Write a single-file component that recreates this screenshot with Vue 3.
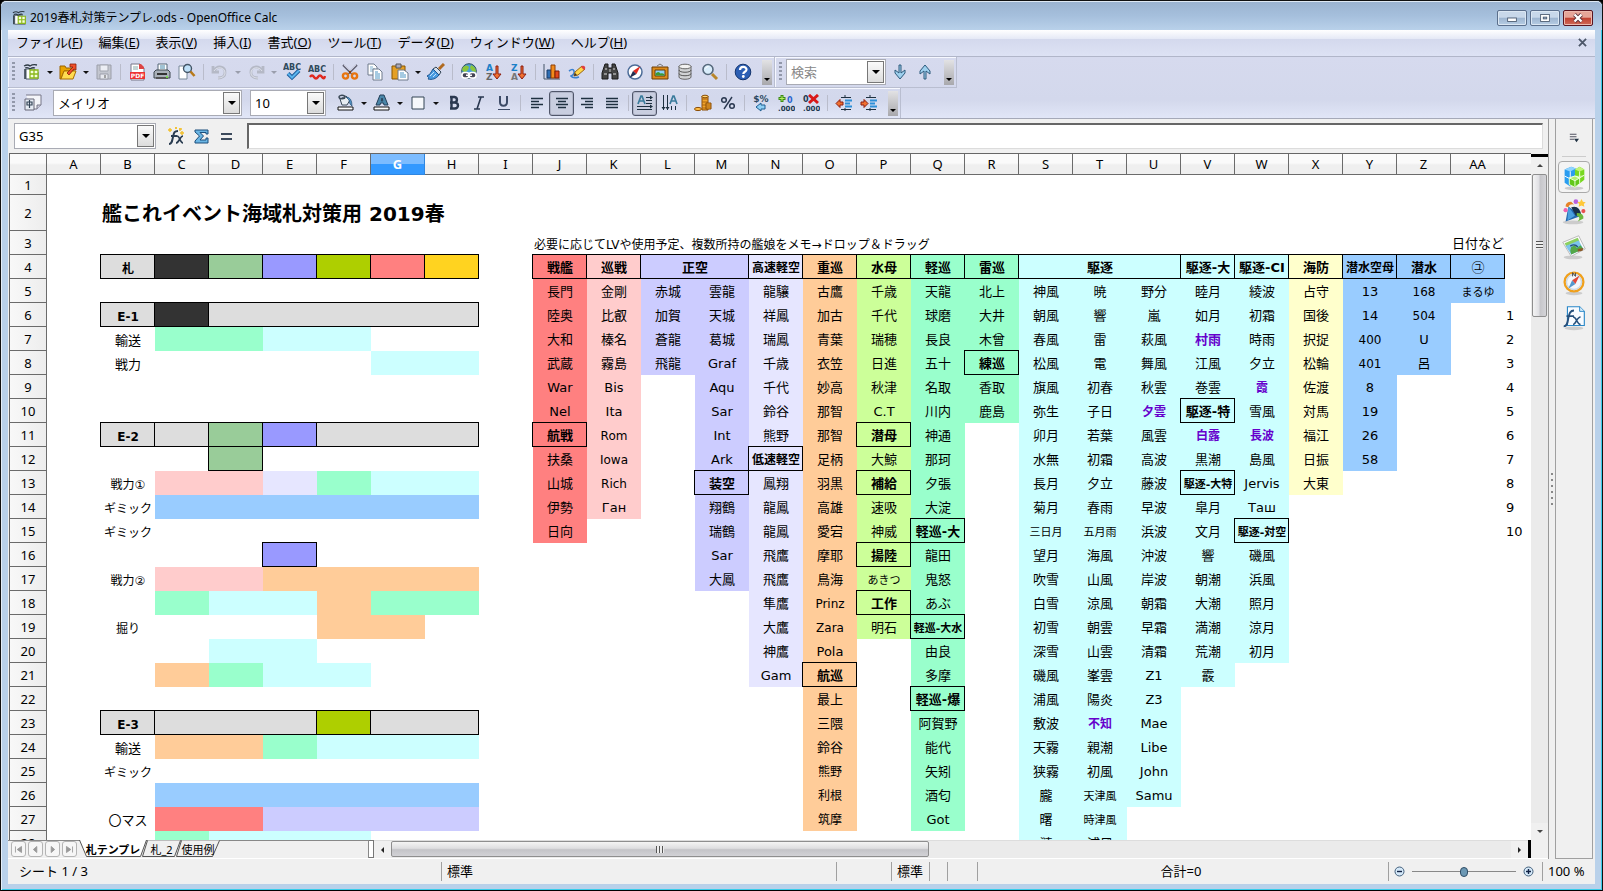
<script setup>
import { ref } from 'vue'

const icons = {
  newdoc: '<path d="M3 6h8l4 3v7H3z" fill="#fff" stroke="#4c5a66"/><path d="M1 3q4-2 6 0q3-2 7-1M2 5q3-1 5 1q3-2 5-1" fill="none" stroke="#2e3a44" stroke-width="1.300"/><path d="M2 6v10" stroke="#2e3a44" stroke-width="1.500"/><path d="M7 7h8v8H7zM7 11h8M11 7v8" fill="#f6ffdc" stroke="#8ab81a" stroke-width="1.300"/>',
  open: '<path d="M1 3h5l1 2h8v3H5L2 16H1z" fill="#e9a400" stroke="#9a6200"/><path d="M2 16l3-8h12l-3 8z" fill="#ffdc50" stroke="#a96f00"/><path d="M8 10l6-6-3 0V1h6v6l-2-1-5 6z" fill="#f0502a" stroke="#8a1e08" stroke-width=".8"/>',
  save: '<path d="M2 2h14v14H2z" fill="#c3c6cf" stroke="#9b9ea9"/><path d="M5 2h8v6H5z" fill="#eceef4" stroke="#a2a5af"/><path d="M5 11h8v5H5z" fill="#e7e9ef" stroke="#9b9ea9"/><path d="M10 12v3" stroke="#888" stroke-width="1.500"/>',
  pdf: '<path d="M3 1h9l4 4v12H3z" fill="#fff" stroke="#778"/><path d="M11 1h2l3 3v2h-5z" fill="#d44"/><path d="M5 4h5M5 6h5" stroke="#8aa" /><path d="M2 9h15v7H2z" fill="#e33"/><text x="9.500" y="15" font-size="6" font-weight="bold" text-anchor="middle" fill="#fff" font-family="DejaVu Sans">PDF</text>',
  print: '<path d="M5 1h9v8H5z" fill="#fff" stroke="#567"/><path d="M7 3h5M7 5h5" stroke="#48a"/><path d="M1 9l2-2h12l2 2v6H1z" fill="#a9b0b8" stroke="#3d464f"/><path d="M4 10h10v2H4z" fill="#333"/><path d="M3 14h12v2H3z" fill="#555"/><path d="M13 14h2" stroke="#7e4" stroke-width="1.500"/>',
  preview: '<path d="M1 3h6l2 2v11H1z" fill="#fff" stroke="#789"/><circle cx="9.500" cy="5.500" r="4" fill="#bfe0f8" stroke="#456" stroke-width="1.400"/><path d="M12.500 8.500l4 4.500" stroke="#b87a1a" stroke-width="2.600"/>',
  undo: '<path d="M2 3v6h6M3 8C6 2 15 3 14 10c0 3-3 5-7 5" fill="none" stroke="#b5b9c6" stroke-width="2.800"/><path d="M3 8C6 3 14 4 14 10c0 3-3 5-7 5" fill="none" stroke="#dfe2ec" stroke-width="1"/>',
  redo: '<path d="M16 3v6h-6M15 8C12 2 3 3 4 10c0 3 3 5 7 5" fill="none" stroke="#b5b9c6" stroke-width="2.800"/><path d="M15 8C12 3 4 4 4 10c0 3 3 5 7 5" fill="none" stroke="#dfe2ec" stroke-width="1"/>',
  spell: '<text x="9" y="7" font-size="8" font-weight="bold" text-anchor="middle" fill="#2f4a5c" font-family="DejaVu Sans">ABC</text><path d="M5 10.500l4 4 7-7" fill="none" stroke="#1c5b9b" stroke-width="4"/><path d="M5 10.500l4 4 7-7" fill="none" stroke="#59b4ee" stroke-width="2"/>',
  autospell: '<text x="9" y="9" font-size="8" font-weight="bold" text-anchor="middle" fill="#2f4a5c" font-family="DejaVu Sans">ABC</text><path d="M2 14q2-3 4 0t4 0t4 0t3-1" fill="none" stroke="#e02a20" stroke-width="2.400"/>',
  cut: '<path d="M2 2l10 10M16 2L6 12" stroke="#667" stroke-width="2"/><path d="M3 2l9 9M15 2l-9 9" stroke="#dde" stroke-width=".8"/><circle cx="4.500" cy="13" r="2.600" fill="none" stroke="#e87510" stroke-width="2.400"/><circle cx="13.500" cy="13" r="2.600" fill="none" stroke="#e87510" stroke-width="2.400"/><circle cx="9" cy="9" r="1.200" fill="#8a3c05"/>',
  copy: '<path d="M2 1h6l3 3v8H2z" fill="#fff" stroke="#6e7b8c"/><path d="M4 4h3M4 6h5M4 8h5" stroke="#7fb0d0"/><path d="M7 6h6l3 3v8H7z" fill="#fff" stroke="#6e7b8c"/><path d="M9 9h3M9 11h5M9 13h5M9 15h5" stroke="#4d96c4"/>',
  paste: '<path d="M1 3h13v13H1z" fill="#e5a025" stroke="#885500"/><path d="M5 1h5v4H5z" fill="#aab" stroke="#555"/><path d="M7 7h6l4 3v7H7z" fill="#fff" stroke="#6e7b8c"/><path d="M9 10h4M9 12h6M9 14h6" stroke="#4d96c4"/>',
  brush: '<path d="M17 1l-5 5" stroke="#b06a20" stroke-width="3"/><path d="M9 4l5 5-2 3-6-6z" fill="#d5e0ee" stroke="#345"/><path d="M6 6l6 6c-3 4-7 5-11 4 1-1 1-2-1-3 3-1 4-4 6-7z" fill="#4a9be0" stroke="#1d5590"/><path d="M3 13l4-4M6 14l3-3" stroke="#bfe2ff"/>',
  link: '<circle cx="9" cy="8" r="7.300" fill="#4a9ed8" stroke="#2c4c58"/><path d="M3 4q4-3 6 0q-1 5-5 5l-2-2zM11 2q5 2 5 7l-4-1-2-3z" fill="#8cc63a"/><rect x="2" y="9.500" width="7" height="5.500" rx="2.500" fill="#445" stroke="#fff" stroke-width="1.500"/><rect x="9" y="9.500" width="7" height="5.500" rx="2.500" fill="#445" stroke="#fff" stroke-width="1.500"/><path d="M6 12.200h6" stroke="#fff" stroke-width="1.500"/>',
  sortaz: '<text x="1" y="8" font-size="9" font-weight="bold" fill="#1c80c8" font-family="DejaVu Sans">A</text><text x="1" y="17" font-size="9" font-weight="bold" fill="#666" font-family="DejaVu Sans">Z</text><path d="M11 3h2v8h3l-4 5-4-5h3z" fill="#f07030" stroke="#8c1d10"/>',
  sortza: '<text x="1" y="8" font-size="9" font-weight="bold" fill="#1c80c8" font-family="DejaVu Sans">Z</text><text x="1" y="17" font-size="9" font-weight="bold" fill="#777" font-family="DejaVu Sans">A</text><path d="M11 3h2v8h3l-4 5-4-5h3z" fill="#f07030" stroke="#8c1d10"/>',
  chart: '<path d="M1 1v15h16" fill="none" stroke="#456"/><path d="M4 7h4v8H4z" fill="#2f6fb5" stroke="#163b68"/><path d="M8 2h4v13H8z" fill="#f28c1c" stroke="#8d3d05"/><path d="M12 8h4v7h-4z" fill="#e3481c" stroke="#7c1c05"/>',
  draw: '<path d="M1 8q4-3 5 0t-3 5q2 3 8 1" fill="none" stroke="#3a80d0" stroke-width="1.600"/><path d="M6 13l1-4 7-6 3 3-7 6z" fill="#ffd84a" stroke="#9a6510"/><path d="M13 4l3 3 1-1c1-2-1-4-3-3z" fill="#e04040"/><path d="M6 13l1-3 2 2z" fill="#333"/>',
  binoc: '<path d="M4 1h3v4h4V1h3l3 9v6h-6v-6H7v6H1v-6z" fill="#444" stroke="#1a1a1a"/><path d="M3 11h3M12 11h3M4 6h2M12 6h2" stroke="#aaa" stroke-width="1.500"/><path d="M8 6h2v3H8z" fill="#888"/>',
  compass: '<circle cx="9" cy="9" r="7" fill="#fff" stroke="#4c6c98" stroke-width="1.500"/><path d="M14.500 3L7 8l3.500 3z" fill="#e02a20"/><path d="M3.500 15L7 8l3.500 3z" fill="#222e50"/>',
  gallery: '<path d="M6 3l3-2 3 2" fill="none" stroke="#777"/><path d="M1 4h16v12H1z" fill="#dc8b1c" stroke="#6b3c05"/><path d="M4 7h10v6H4z" fill="#8cd0f8" stroke="#6b3c05"/><path d="M4.500 12.500v-2q3-3 5 0q2-1 4 1v1z" fill="#3c9a30"/>',
  db: '<path d="M3 3v11c0 3 12 3 12 0V3" fill="#d0d2d4" stroke="#666"/><ellipse cx="9" cy="3.500" rx="6" ry="2.300" fill="#f2f2f2" stroke="#666"/><path d="M3 7c0 3 12 3 12 0M3 10.500c0 3 12 3 12 0" fill="none" stroke="#555"/>',
  zoom: '<circle cx="7" cy="6.500" r="5" fill="#d8ecfa" stroke="#56697c" stroke-width="1.600"/><path d="M11 11l5 5" stroke="#b8862a" stroke-width="3"/><path d="M4.500 5.500q1-2 3-2" stroke="#fff" fill="none"/>',
  help: '<circle cx="9" cy="9" r="7.800" fill="#2c5fb4" stroke="#14356e"/><path d="M6 7c0-4 6.500-4 6.500-.500C12.500 9 9.300 8.500 9.300 11" fill="none" stroke="#fff" stroke-width="2.200"/><circle cx="9.300" cy="13.500" r="1.400" fill="#fff"/>',
  down: '<path d="M8 2h2v8l4-3v3l-5 6-5-6V7l4 3z" fill="#9ed0ee" stroke="#2c5a7c"/>',
  up: '<path d="M8 16h2V8l4 3V8L9 2 4 8v3l4-3z" fill="#9ed0ee" stroke="#2c5a7c"/>',
  styles: '<path d="M2 1h15v10l-4 4H8" fill="#f4f5f9" stroke="#778"/><path d="M17 11h-4v4" fill="#ccd" stroke="#778"/><path d="M1 5h9v11H1z" fill="#e6ecf4" stroke="#667"/><path d="M3 8h5v3H3zM5.500 6v8" fill="none" stroke="#345" stroke-width="1.200"/>',
  fill: '<path d="M1 13h15v3H1z" fill="#fff" stroke="#111"/><path d="M3 5l6-3 4 4-3 5H5z" fill="#e8edf2" stroke="#3c4a58"/><ellipse cx="5" cy="3" rx="3" ry="1.800" fill="none" stroke="#3c4a58" stroke-width="1.400"/><path d="M9 3q6 0 6 9l-2-2-1-4z" fill="#5295c8" stroke="#244c70" stroke-width=".7"/>',
  color: '<path d="M1 13h15v3H1z" fill="#fff" stroke="#111"/><path d="M7 1h4l4 10h-4l-.500-2h-3l-.500 2H3zM8.300 7h1.500L9 4z" fill="#4a86a8" stroke="#243f58"/>',
  border: '<path d="M3 3h12v12H3z" fill="#f6f8fb" stroke="#345"/>',
  bold: '<path d="M5 3h4.500a3 2.800 0 0 1 0 5.500H5M5 8.500h5a3 3 0 0 1 0 6H5M6.500 3v11.500" fill="none" stroke="#2a3850" stroke-width="2.400"/>',
  italic: '<path d="M8 3h6M4 15h6M11 3L7 15" fill="none" stroke="#2a3850" stroke-width="1.600"/>',
  underline: '<path d="M5 2v6c0 5 7 5 7 0V2" fill="none" stroke="#3c4a66" stroke-width="2"/><path d="M3 15.500h12" stroke="#3c4a66"/>',
  left: '<path d="M3 4.500h12M3 7.500h8M3 10.500h12M3 13.500h8" stroke="#1e3040" stroke-width="1.400"/>',
  center: '<path d="M3 4.500h12M5 7.500h8M3 10.500h12M5 13.500h8" stroke="#1e3040" stroke-width="1.400"/>',
  right: '<path d="M3 4.500h12M7 7.500h8M3 10.500h12M7 13.500h8" stroke="#1e3040" stroke-width="1.400"/>',
  justify: '<path d="M3 4.500h12M3 7.500h12M3 10.500h12M3 13.500h12" stroke="#1e3040" stroke-width="1.400"/>',
  ltr: '<path d="M2 10L5 2h1l3 8M3 7h5" fill="none" stroke="#3b7c9c" stroke-width="1.700"/><path d="M10 3.500h6M10 6.500h6M10 9.500h6M1 12.500h15M1 15.500h15" stroke="#1e3040"/><path d="M14 1.500l3 2-3 2zM14 10.500l3 2-3 2z" fill="#1e3040"/>',
  ttb: '<path d="M9 10l3-8h1l3 8M10 7h5" fill="none" stroke="#3b7c9c" stroke-width="1.700"/><path d="M2.500 1v15M6.500 1v15M10.500 12v4M14.500 12v4" stroke="#1e3040"/><path d="M.5 13l2 3 2-3zM4.500 13l2 3 2-3z" fill="#1e3040"/>',
  currency: '<path d="M8 2h6v14H8z" fill="#f2a52c" stroke="#8a4c05"/><path d="M8 5h6M8 8h6M8 11h6M8 14h6" stroke="#a86410"/><ellipse cx="11" cy="2.500" rx="3" ry="1.300" fill="#ffd774" stroke="#8a4c05"/><ellipse cx="4" cy="15" rx="3.500" ry="1.600" fill="#ffbd45" stroke="#8a4c05"/><path d="M12 9h5v6h-5z" fill="#f2a52c" stroke="#8a4c05"/><path d="M12 11h5M12 13h5" stroke="#a86410"/>',
  percent: '<circle cx="5" cy="6" r="2.300" fill="none" stroke="#2a3850" stroke-width="1.500"/><circle cx="13" cy="12" r="2.300" fill="none" stroke="#2a3850" stroke-width="1.500"/><path d="M13 3L5 15" stroke="#2a3850" stroke-width="1.400"/>',
  standard: '<text x="9" y="8" font-size="9" font-weight="bold" text-anchor="middle" fill="#2c4860" font-family="DejaVu Sans">$%</text><path d="M4 13l5-4v2h4v4H9v2z" fill="#8fd0f5" stroke="#1d5d90"/>',
  adddec: '<path d="M5 1v7M1.500 4.500h7" stroke="#3a8a14" stroke-width="3"/><path d="M5 2v5M2.500 4.500h5" stroke="#b4f060"/><text x="10" y="9" font-size="8" font-weight="bold" fill="#2a66d0" font-family="DejaVu Sans">0</text><text x="1" y="17" font-size="7" font-weight="bold" fill="#223850" font-family="DejaVu Sans">.000</text>',
  deldec: '<text x="1" y="8" font-size="8" font-weight="bold" fill="#223850" font-family="DejaVu Sans">0</text><path d="M7 1l9 8M16 1L7 9" stroke="#d81818" stroke-width="3"/><text x="1" y="17" font-size="7" font-weight="bold" fill="#223850" font-family="DejaVu Sans">.000</text>',
  outdent: '<path d="M6 3.500h10M6 15.500h10M10 1v3M10 14v3" stroke="#1e3040"/><path d="M10 6.500h7M10 9.500h5M10 12.500h7" stroke="#2c8fd8" stroke-width="2"/><path d="M1 9.500l4-4v2.500h3v3H5v2.500z" fill="#f07030" stroke="#8c1d10"/>',
  indent: '<path d="M6 3.500h10M6 15.500h10M10 1v3M10 14v3" stroke="#1e3040"/><path d="M10 6.500h7M10 9.500h5M10 12.500h7" stroke="#2c8fd8" stroke-width="2"/><path d="M8 9.500l-4-4v2.500H1v3h3v2.500z" fill="#f07030" stroke="#8c1d10"/>',
  fx: '<path d="M2 17c3 0 3-3 4-7s1-6 5-6M4 9h6" fill="none" stroke="#2a3c50" stroke-width="2"/><path d="M10 9c3 0 3 7 6 7M16 9c-3 0-4 7-7 7" fill="none" stroke="#2a3c50" stroke-width="1.700"/><path d="M3 1v4M1 3h4M15 4v4M13 6h4M9 0v2M8 1h2M13 1v3M12 2h3" stroke="#f2c02c" stroke-width="1.400"/>',
  sum: '<path d="M3 3h13v4h-2V5.500H8L11.500 9 8 13h6v-2h2v5H3v-2l4.500-5L3 5z" fill="#6bb6e4" stroke="#1c4f7c"/>',
  equals: '<path d="M4 7h11M4 12h11" stroke="#3c4a5c" stroke-width="2"/>'
}

const B = (icon, name) => ({ icon, name })
const A = (icon, name, dim) => ({ icon, name, arrow: true, dim })
const S = { sep: true }
const standardBar = [
  A('newdoc', '新規作成'), A('open', '開く'), B('save', '保存'), S,
  B('pdf', 'PDFとして直接エクスポート'), B('print', '印刷'), B('preview', 'プレビュー'), S,
  A('undo', '元に戻す', true), A('redo', 'やり直し', true), B('spell', 'スペルチェック'), B('autospell', '自動スペルチェック'), S,
  B('cut', '切り取り'), B('copy', 'コピー'), A('paste', '貼り付け'), B('brush', '書式のコピー'), S,
  B('link', 'ハイパーリンク'), B('sortaz', '昇順'), B('sortza', '降順'), S,
  B('chart', 'グラフ'), B('draw', '図形描画'), S,
  B('binoc', '検索と置換'), B('compass', 'ナビゲータ'), B('gallery', 'ギャラリー'), B('db', 'データソース'), B('zoom', 'ズーム'), S,
  B('help', 'ヘルプ')
]
const formatBar = [
  A('fill', '背景色'), A('color', 'フォントの色'), A('border', '枠線'), B('bold', '太字'), B('italic', '斜体'), B('underline', '下線'), S,
  B('left', '左揃え'), { ...B('center', '中央揃え'), on: true }, B('right', '右揃え'), B('justify', '両端揃え'), S,
  { ...B('ltr', '横書き'), on: true }, B('ttb', '縦書き'), S,
  B('currency', '通貨'), B('percent', 'パーセント'), S,
  B('standard', '標準'), B('adddec', '小数点以下の桁数を増やす'), B('deldec', '小数点以下の桁数を減らす'), S,
  B('outdent', 'インデント減'), B('indent', 'インデント増')
]

const menus = [
  ['ファイル', 'F'], ['編集', 'E'], ['表示', 'V'], ['挿入', 'I'], ['書式', 'O'],
  ['ツール', 'T'], ['データ', 'D'], ['ウィンドウ', 'W'], ['ヘルプ', 'H']
]

const cellRef = ref('G35')
const formula = ref('')
const query = ref('')
const zoom = ref(50)

const letters = [...'ABCDEFGHIJKLMNOPQRSTUVWXYZ', 'AA', 'AB']
const col = (l) => letters.indexOf(l)
const grid = {}
const put = (l, r, cell) => { grid[r + ':' + col(l)] = cell }

/* Ship lists, from row 5 down. Prefixes: * boxed heading, ! purple, ~ 12px, - 11px */
const ships = {
  J: ['red', '長門 陸奥 大和 武蔵 War Nel *航戦 扶桑 山城 伊勢 日向'],
  K: ['pink', '金剛 比叡 榛名 霧島 Bis Ita ~Rom ~Iowa ~Rich Ган'],
  L: ['violet', '赤城 加賀 蒼龍 飛龍'],
  M: ['violet', '雲龍 天城 葛城 Graf Aqu Sar Int Ark *装空 翔鶴 瑞鶴 Sar 大鳳'],
  N: ['pale', '龍驤 祥鳳 瑞鳳 千歳 千代 鈴谷 熊野 *~低速軽空 鳳翔 龍鳳 龍鳳 飛鷹 飛鷹 隼鷹 大鷹 神鷹 Gam'],
  O: ['orange', '古鷹 加古 青葉 衣笠 妙高 那智 那智 足柄 羽黒 高雄 愛宕 摩耶 鳥海 ~Prinz ~Zara Pola *航巡 最上 三隈 鈴谷 ~熊野 ~利根 ~筑摩'],
  P: ['lime', '千歳 千代 瑞穂 日進 秋津 C.T *潜母 大鯨 *補給 速吸 神威 *揚陸 -あきつ *工作 明石'],
  Q: ['mint', '天龍 球磨 長良 五十 名取 川内 神通 那珂 夕張 大淀 *軽巡-大 龍田 鬼怒 あぶ *-軽巡-大水 由良 多摩 *軽巡-爆 阿賀野 能代 矢矧 酒匂 Got'],
  R: ['mint', '北上 大井 木曾 *練巡 香取 鹿島'],
  S: ['cyan', '神風 朝風 春風 松風 旗風 弥生 卯月 水無 長月 菊月 -三日月 望月 吹雪 白雪 初雪 深雪 磯風 浦風 敷波 天霧 狭霧 朧 曙 漣'],
  T: ['cyan', '暁 響 雷 電 初春 子日 若葉 初霜 夕立 春雨 -五月雨 海風 山風 涼風 朝雲 山雲 峯雲 陽炎 !~不知 親潮 初風 -天津風 -時津風 浦風'],
  U: ['cyan', '野分 嵐 萩風 舞風 秋雲 !~夕雲 風雲 高波 藤波 早波 浜波 沖波 岸波 朝霜 早霜 清霜 Z1 Z3 Mae Libe John Samu'],
  V: ['cyan', '睦月 如月 !村雨 江風 巻雲 *駆逐-特 !~白露 黒潮 *-駆逐-大特 皐月 文月 響 朝潮 大潮 満潮 荒潮 霰'],
  W: ['cyan', '綾波 初霜 時雨 夕立 !~霞 雪風 !~長波 島風 Jervis Таш *-駆逐-対空 磯風 浜風 照月 涼月 初月'],
  X: ['cream', '占守 国後 択捉 松輪 佐渡 対馬 福江 日振 大東'],
  Y: ['sky', '13 14 ~400 ~401 8 19 26 58'],
  Z: ['sky', '~168 ~504 U 呂'],
  AA: ['sky', '-まるゆ']
}
for (const [l, [bg, list]] of Object.entries(ships)) {
  list.split(' ').forEach((raw, i) => {
    const cls = [bg]
    let text = raw
    if (text[0] === '*') { cls.push('box', 'b'); text = text.slice(1) }
    if (text[0] === '!') { cls.push('purple', 'b'); text = text.slice(1) }
    if (text[0] === '~') { cls.push('s12'); text = text.slice(1) }
    if (text[0] === '-') { cls.push('s11'); text = text.slice(1) }
    put(l, i + 5, { text, cls })
  })
}
const heads = [
  ['J', '戦艦', 'red'], ['K', '巡戦', 'pink'], ['L', '正空', 'violet', 2], ['N', '高速軽空', 'pale s12'],
  ['O', '重巡', 'orange'], ['P', '水母', 'lime'], ['Q', '軽巡', 'mint'], ['R', '雷巡', 'mint'],
  ['S', '駆逐', 'cyan', 3], ['V', '駆逐-大', 'cyan'], ['W', '駆逐-CI', 'cyan'], ['X', '海防', 'cream'],
  ['Y', '潜水空母', 'sky s12'], ['Z', '潜水', 'sky'], ['AA', '㋴', 'sky']
]
for (const [l, text, bg, span] of heads) put(l, 4, { text, span, cls: [bg, 'box', l === 'AA' ? '' : 'b'] })
for (let n = 1; n <= 10; n++) put('AB', n + 5, { text: String(n), cls: ['start'] })

put('B', 2, { text: '艦これイベント海域札対策用 2019春', cls: ['title'] })
put('J', 3, { text: '必要に応じてLVや使用予定、複数所持の艦娘をメモ→ドロップ＆ドラッグ', cls: ['start', 's12', 'low'] })
put('AA', 3, { text: '日付など', cls: ['end'] })

const labels = { 4: '札', 6: 'E-1', 7: '輸送', 8: '戦力', 11: 'E-2', 13: '~戦力①', 14: '~ギミック', 15: '~ギミック', 17: '~戦力②', 19: '~掘り', 23: 'E-3', 24: '輸送', 25: '~ギミック', 27: '〇マス' }
for (const [r, raw] of Object.entries(labels)) {
  const head = ['4', '6', '11', '23'].includes(r)
  const small = raw[0] === '~' || head
  put('B', r, { text: raw.replace('~', ''), cls: [head ? 'gray box b' : '', small ? 's12' : '', 'low'] })
}
/* Map bands: row, column, span, colour */
const bands = [
  [4, 'C', 1, 'black box'], [4, 'D', 1, 'green box'], [4, 'E', 1, 'indigo box'], [4, 'F', 1, 'olive box'], [4, 'G', 1, 'red box'], [4, 'H', 1, 'gold box'],
  [6, 'C', 1, 'black box'], [6, 'D', 5, 'gray box'],
  [7, 'C', 2, 'mint'], [7, 'E', 2, 'cyan'], [8, 'G', 2, 'cyan'],
  [11, 'C', 1, 'gray box'], [11, 'D', 1, 'green box'], [11, 'E', 1, 'indigo box'], [11, 'F', 3, 'gray box'], [12, 'D', 1, 'green box'],
  [13, 'C', 2, 'pink'], [13, 'E', 1, 'pale'], [13, 'F', 1, 'mint'], [13, 'G', 2, 'cyan'], [14, 'C', 6, 'sky'],
  [16, 'E', 1, 'indigo box'], [17, 'C', 2, 'pink'], [17, 'E', 4, 'orange'],
  [18, 'C', 1, 'mint'], [18, 'D', 2, 'cyan'], [18, 'F', 1, 'orange'], [18, 'G', 2, 'mint'], [19, 'F', 2, 'orange'],
  [20, 'D', 2, 'cyan'], [21, 'C', 1, 'orange'], [21, 'D', 1, 'mint'], [21, 'E', 2, 'cyan'],
  [23, 'C', 3, 'gray box'], [23, 'F', 1, 'olive box'], [23, 'G', 2, 'gray box'],
  [24, 'C', 2, 'orange'], [24, 'E', 1, 'mint'], [24, 'F', 3, 'cyan'],
  [26, 'C', 6, 'sky'], [27, 'C', 2, 'red'], [27, 'E', 4, 'violet'], [28, 'C', 1, 'mint'], [28, 'D', 3, 'cyan']
]
for (const [r, l, span, cls] of bands) put(l, r, { text: '', span, cls: [cls] })

const rows = []
for (let r = 1; r <= 28; r++) {
  const cells = []
  for (let c = 0; c < letters.length;) {
    const cell = grid[r + ':' + c] || { text: '', cls: [] }
    cells.push(cell)
    c += cell.span || 1
  }
  rows.push({ r, cells })
}

const navs = [
  ['最初のシート', 'M4 4v7M11 4v7L6 7.500z'], ['前のシート', 'M9 4v7L5 7.500z'],
  ['次のシート', 'M6 4v7l4-3.500z'], ['最後のシート', 'M4 4v7l5-3.500zM11 4v7']
]
const tabs = [
  { name: '札テンプレ', w: 68, shape: '0.5,0 7.500,16.500 61.500,16.500 67.500,0' },
  { name: '札_2', w: 39, shape: '5.500,0.500 0.500,16.500 32.500,16.500 38.500,0.500' },
  { name: '使用例', w: 44, shape: '5.500,0.500 0.500,16.500 36.500,16.500 43.500,0.500' }
]

const deck = [
  ['プロパティ', '<ellipse cx="16" cy="28" rx="10" ry="2" fill="#ccc"/><path d="M6 8l7-3 5 2v15l-6 4-6-4z" fill="#2a9df0"/><path d="M6 8l7-3 5 2-6 3z" fill="#8fd4ff"/><path d="M12 10v15M6 15l6 3" stroke="#fff"/><path d="M17 8l5-3 5 3v11l-5 4-5-3z" fill="#78d820"/><path d="M17 8l5-3 5 3-5 2z" fill="#c2f57a"/><path d="M11 17l6-2 5 2v6l-5 4-6-3z" fill="#62c81a" stroke="#e8ffd0"/><path d="M11 17l6-2 5 2-5 3zM17 20v6M22 10v6M18 15l4 2 5-3" fill="#b4f070" stroke="#f0ffe0"/>'],
  ['スタイルと書式設定', '<ellipse cx="15" cy="27" rx="11" ry="2" fill="#ccc"/><path d="M10 10l14 10-17 6z" fill="#2368b0"/><path d="M10 10l7 10-8 5z" fill="#4aa0e0"/><path d="M13 11q9-3 11 9l-6 0z" fill="#18304c"/><path d="M7 10q0-5 6-5l3 3q-5-1-6 3z" fill="#e88428"/><path d="M19 17q8 0 7 6l-6 3q4-4-1-6z" fill="#6cb83c"/><circle cx="18" cy="5" r="2.500" fill="#b860e0"/><path d="M24 2l1.500 3 3 .500-2 2 .500 3-3-1.500-3 1.500.500-3-2-2 3-.500z" fill="#ffc838"/><circle cx="7" cy="14" r="2.200" fill="#f060b0"/><circle cx="26" cy="15" r="2.200" fill="#e85050"/>'],
  ['ギャラリー', '<ellipse cx="15" cy="27" rx="10" ry="2" fill="#ccc"/><path d="M4 11l17-7 7 14-15 8z" fill="#fcfcfc" stroke="#b8b8b8"/><path d="M6 12l14-6 2 4-14 6z" fill="#8cd060"/><path d="M7 15l14-6 5 9-13 6z" fill="#7cc4ec"/><path d="M12 20l1-4 4-2 2 3 4-3 3 4-13 6z" fill="#54a848"/><path d="M12 15q5-3 8 1" fill="none" stroke="#26507c" stroke-width="1.500"/><path d="M20 18l6-1-1 3-5 1z" fill="#8c5a28"/>'],
  ['ナビゲーター', '<ellipse cx="16" cy="28" rx="9" ry="2" fill="#ccc"/><circle cx="16" cy="16" r="10" fill="#f4f7fa" stroke="#f0a01c" stroke-width="2.500"/><circle cx="16" cy="16" r="8" fill="none" stroke="#cbd8e4" stroke-width="1.500"/><path d="M22 9l-8 5 3.500 4z" fill="#e04838"/><path d="M10 23l4-9 3.500 4z" fill="#5498cc"/><path d="M14.500 10V6l3 4V6" fill="none" stroke="#444"/>'],
  ['関数', '<ellipse cx="16" cy="28" rx="10" ry="2" fill="#ccc"/><path d="M9 5h13l5 5v15H9z" fill="#f8fbff" stroke="#2a88c8" stroke-width="1.200"/><path d="M22 5v5h5" fill="#d6ecfa" stroke="#2a88c8"/><path d="M5 26c4 0 4-4 5-9s2-8 6-8M8 15h8" fill="none" stroke="#26507c" stroke-width="2"/><path d="M15 16c4 0 4 8 8 8M23 16c-4 0-5 8-8 8" fill="none" stroke="#26507c" stroke-width="1.700"/>']
]
</script>

<template>
  <div class="window">
    <header class="titlebar">
      <svg class="ic" viewBox="0 0 18 18" v-html="icons.newdoc"></svg>
      <h1>2019春札対策テンプレ.ods - OpenOffice Calc</h1>
      <div class="winbtns">
        <button aria-label="最小化"><svg viewBox="0 0 30 16"><rect x="10" y="8" width="10" height="4" fill="#fff" stroke="#4a5a70" /></svg></button>
        <button aria-label="最大化"><svg viewBox="0 0 30 16"><rect x="10" y="4" width="10" height="8" fill="#fff" stroke="#4a5a70" /><rect x="13" y="7" width="4" height="2" fill="#9cb4d0" stroke="#4a5a70" /></svg></button>
        <button class="close" aria-label="閉じる"><svg viewBox="0 0 30 16"><path d="M11 4l8 8M19 4l-8 8" stroke="#5a3038" stroke-width="4.500" /><path d="M11 4l8 8M19 4l-8 8" stroke="#fff" stroke-width="2.800" /></svg></button>
      </div>
    </header>

    <div class="client">
      <nav class="menubar">
        <button v-for="m in menus" :key="m[1]">{{ m[0] }}(<u>{{ m[1] }}</u>)</button>
        <button class="docclose" aria-label="文書を閉じる"><svg viewBox="0 0 10 10"><path d="M1 1l8 8M9 1L1 9" stroke="#4c5668" stroke-width="2" /></svg></button>
      </nav>

      <div class="bars">
        <div class="line">
          <div class="toolbar">
            <i class="grip"></i>
            <template v-for="(t, i) in standardBar" :key="i">
              <i v-if="t.sep" class="sep"></i>
              <template v-else>
                <button class="tb" :aria-label="t.name"><svg class="ic" viewBox="0 0 18 18" v-html="icons[t.icon]"></svg></button>
                <button v-if="t.arrow" class="drop" :class="{ dim: t.dim }" :aria-label="t.name + 'のメニュー'"></button>
              </template>
            </template>
            <button class="more" aria-label="その他"></button>
          </div>
          <div class="toolbar">
            <i class="grip"></i>
            <div class="combo search">
              <input v-model="query" placeholder="検索" aria-label="検索" />
              <button aria-label="検索履歴"></button>
            </div>
            <button class="tb" aria-label="次を検索"><svg class="ic" viewBox="0 0 18 18" v-html="icons.down"></svg></button>
            <button class="tb" aria-label="前を検索"><svg class="ic" viewBox="0 0 18 18" v-html="icons.up"></svg></button>
            <button class="more" aria-label="その他"></button>
          </div>
        </div>
        <div class="line">
          <div class="toolbar">
            <i class="grip"></i>
            <button class="tb style" aria-label="スタイルと書式設定"><svg class="ic" viewBox="0 0 18 18" v-html="icons.styles"></svg></button>
            <div class="combo face"><select aria-label="フォント名"><option>メイリオ</option></select><i></i></div>
            <div class="combo size"><select aria-label="フォントサイズ"><option>10</option></select><i></i></div>
            <template v-for="(t, i) in formatBar" :key="i">
              <i v-if="t.sep" class="sep"></i>
              <template v-else>
                <button class="tb" :class="{ on: t.on }" :aria-label="t.name"><svg class="ic" viewBox="0 0 18 18" v-html="icons[t.icon]"></svg></button>
                <button v-if="t.arrow" class="drop" :aria-label="t.name + 'のメニュー'"></button>
              </template>
            </template>
            <button class="more" aria-label="その他"></button>
          </div>
        </div>
      </div>

      <div class="work">
        <main>
          <div class="formula">
            <div class="combo name"><input v-model="cellRef" aria-label="名前ボックス" /><button aria-label="名前の一覧"></button></div>
            <button class="tb" aria-label="関数ウィザード"><svg class="ic" viewBox="0 0 18 18" v-html="icons.fx"></svg></button>
            <button class="tb" aria-label="合計"><svg class="ic" viewBox="0 0 18 18" v-html="icons.sum"></svg></button>
            <button class="tb" aria-label="関数"><svg class="ic" viewBox="0 0 18 18" v-html="icons.equals"></svg></button>
            <input class="entry" v-model="formula" aria-label="数式入力" />
          </div>

          <div class="sheetarea">
            <div class="sheet">
              <table>
                <colgroup><col class="c0" /><col v-for="n in 27" :key="n" class="c" /><col /></colgroup>
                <thead>
                  <tr><th></th><th v-for="l in letters" :key="l" :class="{ sel: l === 'G' }">{{ l === 'AB' ? '' : l }}</th></tr>
                </thead>
                <tbody>
                  <tr v-for="row in rows" :key="row.r" :class="'r' + row.r">
                    <th>{{ row.r }}</th>
                    <td v-for="(c, i) in row.cells" :key="i" :colspan="c.span || 1" :class="c.cls">{{ c.text }}</td>
                  </tr>
                </tbody>
              </table>
            </div>
            <div class="vscroll">
              <i class="split"></i>
              <button class="arr upw" aria-label="上へ"></button>
              <div class="track"><div class="thumb"><i></i></div></div>
              <button class="arr dnw" aria-label="下へ"></button>
            </div>
          </div>

          <div class="bottom">
            <div class="tabpane">
              <button v-for="n in navs" :key="n[0]" class="nav" :aria-label="n[0]"><svg viewBox="0 0 15 15"><path :d="n[1]" fill="#999" stroke="#999" /></svg></button>
              <div class="tabs">
                <button v-for="(t, i) in tabs" :key="t.name" class="tab" :class="{ active: i === 0 }" :style="{ width: t.w + 'px' }">
                  <svg :width="t.w" height="18"><polygon v-if="i === 0" :points="t.shape" fill="#fff" /><polyline :points="t.shape" :fill="i === 0 ? 'none' : '#f0f0f0'" stroke="#555" /></svg>
                  <span>{{ t.name }}</span>
                </button>
              </div>
            </div>
            <i class="handle"></i>
            <div class="hscroll">
              <button class="arr lf" aria-label="左へ"></button>
              <div class="track"><div class="thumb"><i></i></div></div>
              <button class="arr rt" aria-label="右へ"></button>
            </div>
            <i class="hsplit"></i>
            <i class="corner"></i>
          </div>
        </main>
        <div class="splitter"><i></i></div>
        <aside>
          <button class="menu" aria-label="サイドバー設定"><svg viewBox="0 0 12 12"><path d="M1 1.500h8M1 4.500h8M1 7.500h5" stroke="#334" /><path d="M6 7h6l-3 4z" fill="#234" /></svg></button>
          <button v-for="(d, i) in deck" :key="d[0]" class="deck" :class="{ on: i === 0 }" :aria-label="d[0]"><svg viewBox="0 0 32 32" v-html="d[1]"></svg></button>
        </aside>
      </div>

      <footer>
        <span class="f1">シート 1 / 3</span>
        <span class="f2">標準</span>
        <span class="f3"></span>
        <span class="f4">標準</span>
        <span class="f5"></span>
        <span class="f6"></span>
        <span class="f7">合計=0</span>
        <span class="f8">
          <button class="zb" aria-label="縮小"><svg viewBox="0 0 11 11"><circle cx="5.500" cy="5.500" r="4.500" fill="#d4e8f8" stroke="#44607c" /><path d="M3 5.500h5" stroke="#124" stroke-width="1.400" /></svg></button>
          <input v-model="zoom" type="range" min="0" max="100" aria-label="ズーム" />
          <button class="zb" aria-label="拡大"><svg viewBox="0 0 11 11"><circle cx="5.500" cy="5.500" r="4.500" fill="#d4e8f8" stroke="#44607c" /><path d="M3 5.500h5M5.500 3v5" stroke="#124" stroke-width="1.400" /></svg></button>
        </span>
        <span class="f9">100 %</span>
      </footer>
    </div>
  </div>
</template>

<style>
html, body { margin: 0; background: #000; }
</style>

<style scoped>
.window {
  box-sizing: border-box; height: 100vh; display: flex; flex-direction: column;
  padding: 0 7px 6px; border: 1px solid #111; border-bottom-color: #000; border-radius: 6px 6px 0 0;
  background: #b9d1ea; box-shadow: inset 1px 1px 0 #e4eef8, inset -1px -1px 0 #38cdea;
  font: 13px/18px "Noto Sans", "Noto Sans CJK JP", sans-serif; color: #000; overflow: hidden;
}
button { padding: 0; border: 0; background: none; font: inherit; color: inherit; }
input, select { font: inherit; color: inherit; border: 0; outline: 0; background: none; padding: 0; min-width: 0; border-radius: 0; appearance: none; }
i { font-style: normal; flex: none; box-sizing: border-box; }
svg { display: block; flex: none; }
.ic { width: 18px; height: 18px; }

.titlebar { flex: none; height: 29px; display: flex; align-items: center; margin: 0 -7px; padding: 4px 7px 0 11px; box-sizing: border-box; background: linear-gradient(#9bb3d0, #a5bfdc 50%, #b9d1ea); border-radius: 5px 5px 0 0; box-shadow: inset 0 1px 0 #dfe9f4; }
.titlebar .ic { width: 16px; height: 16px; margin-right: 2px; }
h1 { margin: 0; font-size: 12px; font-weight: 400; flex: 1; white-space: nowrap; }
.winbtns { display: flex; gap: 3px; padding-right: 2px; }
.winbtns button { width: 30px; height: 16px; border-radius: 2px; border: 1px solid #5b6f8c; box-sizing: border-box; background: linear-gradient(#c8d8ea 45%, #9db5d0 50%, #b7cde4); box-shadow: inset 0 0 0 1px #dbe7f3; }
.winbtns svg { width: 28px; height: 14px; }
.winbtns .close { border-color: #5a1520; background: linear-gradient(#e6a598 45%, #c04030 50%, #cf6a58); box-shadow: inset 0 0 0 1px #ecb9ae; }

.client { flex: 1; min-height: 0; display: flex; flex-direction: column; background: #f0f0f0; }
.menubar { flex: none; display: flex; gap: 16px; align-items: center; height: 26px; padding: 0 8px 2px; box-sizing: content-box; height: 24px; background: linear-gradient(#fff, #e5e9f6 34%, #d4d9ed 35%, #dde2f4); border-bottom: 1px solid #b1b6c9; white-space: nowrap; }
.docclose { margin-left: auto; }
.docclose svg { width: 9px; height: 9px; }

.bars { flex: none; background: linear-gradient(#d6daee, #d3d8ec 70%, #e1e6f7); border-bottom: 1px solid #a5a9b8; }
.line { display: flex; height: 31px; }
.line + .line { height: 30px; }
.toolbar { display: flex; align-items: center; box-sizing: border-box; border-bottom: 1px solid #b9bed0; border-right: 1px solid #b9bed0; box-shadow: inset 1px 1px 0 #f6f8ff; padding-right: 2px; }
.line + .line .toolbar { border-bottom: 0; }
.grip { width: 3px; height: 20px; margin: 0 4px; background: repeating-linear-gradient(#9298aa 0 2px, transparent 2px 4px); }
.tb { flex: none; width: 25px; height: 25px; display: flex; align-items: center; justify-content: center; box-sizing: border-box; }
.tb.on { border: 1px solid #50566a; border-radius: 3px; background: #c9cee0; box-shadow: inset 0 0 0 1px #b0b5c8; }
.sep { width: 8px; height: 16px; background: linear-gradient(#b9bccb, #b9bccb) center / 1px 100% no-repeat; }
.drop { flex: none; width: 11px; height: 20px; display: flex; align-items: center; justify-content: center; }
.drop::after { content: ""; border: 3px solid transparent; border-top-color: #111; border-bottom: 0; }
.drop.dim::after { border-top-color: #9a9eac; }
.more { flex: none; width: 10px; height: 25px; margin-left: 7px; background: linear-gradient(#e2e2e4, #a8a8ac); display: flex; align-items: flex-end; justify-content: center; }
.more::after { content: ""; border: 3px solid transparent; border-top-color: #000; border-bottom: 0; margin-bottom: 4px; }

.combo { flex: none; display: flex; align-items: center; box-sizing: border-box; height: 26px; border: 1px solid #a9abb4; background: #fff; padding: 0 1px 0 4px; }
.combo input, .combo select { flex: 1; height: 22px; }
.combo > i, .combo > button { flex: none; box-sizing: border-box; width: 17px; height: 22px; border: 1px solid #777; background: linear-gradient(#fafafa, #dcdcdc); display: flex; align-items: center; justify-content: center; }
.combo > i::after, .combo > button::after { content: ""; border: 4px solid transparent; border-top-color: #000; border-bottom: 0; }
.search { width: 100px; margin-right: 1px; }
.search input::placeholder { color: #888; opacity: 1; }
.style { margin: 0 8px 0 1px; }
.face { width: 189px; }
.size { width: 76px; margin: 0 7px 0 8px; }

.work { flex: 1; min-height: 0; display: flex; }
main { flex: 1; min-width: 0; display: flex; flex-direction: column; border-right: 1px solid #999; }
.formula { flex: none; display: flex; align-items: center; height: 34px; padding: 0 5px 0 6px; box-sizing: border-box; }
.name { width: 142px; margin-right: 7px; }
.entry { flex: 1; height: 26px; margin-left: 9px; box-sizing: border-box; background: #fff; border: 1px solid #dcdcdc; border-top: 2px solid #666; border-left: 2px solid #666; padding: 0 4px; }

.sheetarea { flex: 1; min-height: 0; display: flex; }
.sheet { flex: 1; min-width: 0; overflow: hidden; background: #fff; margin-left: 1px; border-left: 1px solid #666; border-top: 1px solid #666; }
table { width: 100%; table-layout: fixed; border-collapse: separate; border-spacing: 0; }
.c0 { width: 37px; }
.c { width: 54px; }
th, td { padding: 0; height: 24px; box-sizing: border-box; white-space: nowrap; text-align: center; vertical-align: middle; line-height: 18px; }
th { font-weight: 400; border-right: 1px solid #6b6b6b; border-bottom: 1px solid #6b6b6b; background: linear-gradient(90deg, #f8f8f8, #ededed); }
thead th { height: 21px; background: linear-gradient(#fafafa 45%, #efefef 55%); }
thead th:last-child { border-right: 0; }
thead th.sel { background: linear-gradient(#7cbcff 48%, #3399ff 52%); color: #fff; font-weight: 700; border-color: #2f86e0; }
td { position: relative; padding-top: 2px; font-family: "DejaVu Sans", "Noto Sans CJK JP", sans-serif; }
.r1 > * { height: 20px; }
.r2 > * { height: 36px; }
.b { font-weight: 700; }
.s12 { font-size: 12px; }
.s11 { font-size: 11px; }
.s11, .low { padding-top: 3px; }
.start { text-align: left; padding-left: 1px; }
.end { text-align: right; padding-right: 1px; }
.title { text-align: left; font-size: 20px; font-weight: 700; line-height: 30px; padding-left: 1px; }
.purple { color: #6600cc; }
.box::after { content: ""; position: absolute; inset: -1px 0 0 -1px; border: 1px solid #000; z-index: 1; pointer-events: none; }
.red { background: #ff8080; }
.pink { background: #ffcccc; }
.violet { background: #ccccff; }
.pale { background: #e6e6ff; }
.orange { background: #ffcc99; }
.lime { background: #ccff99; }
.mint { background: #99ffcc; }
.cyan { background: #ccffff; }
.cream { background: #ffffcc; }
.sky { background: #99ccff; }
.gray { background: #dddddd; }
.black { background: #333333; }
.green { background: #99cc99; }
.indigo { background: #9999ff; }
.olive { background: #aecf00; }
.gold { background: #ffd320; }

.vscroll { flex: none; width: 17px; display: flex; flex-direction: column; background: #f0f0f0; }
.split { height: 3px; background: #000; margin-top: 1px; }
.arr { flex: none; display: flex; align-items: center; justify-content: center; width: 17px; height: 17px; }
.arr::after { content: ""; border: 3px solid transparent; }
.upw::after { border-bottom-color: #444; border-top: 0; }
.dnw::after { border-top-color: #444; border-bottom: 0; }
.lf::after { border-right-color: #222; border-left: 0; }
.rt::after { border-left-color: #222; border-right: 0; }
.track { flex: 1; min-width: 0; background: #ebebeb; }
.thumb { display: flex; align-items: center; justify-content: center; box-sizing: border-box; border: 1px solid #8e8e8e; border-radius: 2px; }
.vscroll .thumb { width: 15px; height: 22%; margin: 0 1px; background: linear-gradient(90deg, #f4f4f4, #e0e0e4 45%, #c6c6ca 55%, #d4d4d8); }
.vscroll .thumb i { width: 7px; height: 8px; background: repeating-linear-gradient(#555 0 1px, #eee 1px 3px); }

.bottom { flex: none; display: flex; height: 19px; border-bottom: 1px solid #fff; box-sizing: border-box; }
.tabpane { display: flex; width: 361px; box-sizing: border-box; border-top: 1px solid #888; border-right: 1px solid #888; gap: 2px; padding-left: 3px; align-items: flex-start; }
.nav { width: 15px; height: 16px; border: 1px solid #b4b4b4; border-radius: 3px; box-sizing: border-box; background: #f6f6f6; }
.nav svg { width: 13px; height: 13px; }
.tabs { display: flex; margin-top: -1px; }
.tab { position: relative; height: 18px; font-size: 12px; line-height: 17px; text-align: center; white-space: nowrap; }
.tab + .tab { margin-left: -5px; font-size: 11px; }
.tab svg { position: absolute; inset: 0; }
.tab span { position: relative; }
.tab.active { z-index: 1; font-weight: 700; font-size: 11px; }
.handle { width: 5px; border: 1px solid #777; background: #fff; border-left: 0; }
.hscroll { flex: 1; min-width: 0; display: flex; border-top: 1px solid #ddd; }
.hscroll .thumb { width: 48%; height: 16px; background: linear-gradient(#f4f4f4, #dedee0 45%, #c4c4c8 55%, #d2d2d6); }
.hscroll .thumb i { width: 8px; height: 7px; background: repeating-linear-gradient(90deg, #555 0 1px, #eee 1px 3px); }
.hsplit { width: 3px; background: #000; }
.corner { width: 17px; }

.splitter { flex: none; width: 6px; display: flex; align-items: center; justify-content: center; }
.splitter i { width: 2px; height: 32px; background: repeating-linear-gradient(#888 0 2px, transparent 2px 6px); }
aside { flex: none; width: 36px; border: 1px solid #a0a0a0; border-top: 0; margin-right: 2px; display: flex; flex-direction: column; align-items: center; }
aside .menu { width: 24px; height: 38px; display: flex; align-items: center; justify-content: center; border-bottom: 1px solid #ccc; margin-bottom: 4px; }
aside .menu svg { width: 10px; height: 10px; }
.deck { width: 32px; height: 32px; margin-bottom: 3px; box-sizing: border-box; border: 1px solid transparent; border-radius: 4px; }
.deck.on { border-color: #aaa; background: #f4f4f4; }
.deck svg { width: 30px; height: 30px; }

footer { flex: none; height: 25px; display: flex; align-items: center; }
footer span { box-sizing: border-box; height: 19px; line-height: 19px; border-left: 1px solid #a0a0a0; padding-left: 5px; white-space: nowrap; }
footer .f1 { width: 433px; border: 0; padding-left: 11px; }
.f2 { width: 395px; }
.f3 { width: 55px; }
.f4 { width: 38px; }
.f5 { width: 18px; }
.f6 { width: 30px; }
footer .f7 { flex: 1; text-align: center; padding: 0 4px 0 0; }
.f8 { width: 154px; display: flex; align-items: center; gap: 5px; padding-right: 8px; }
.f9 { width: 53px; }
.zb, .zb svg { width: 11px; height: 11px; }
.f8 input { flex: 1; height: 14px; background: linear-gradient(#888, #888) center / 100% 1px no-repeat; }
.f8 input::-webkit-slider-thumb { appearance: none; width: 8px; height: 10px; border-radius: 4px; border: 1px solid #2f4d66; background: #6c98b4; }
</style>
